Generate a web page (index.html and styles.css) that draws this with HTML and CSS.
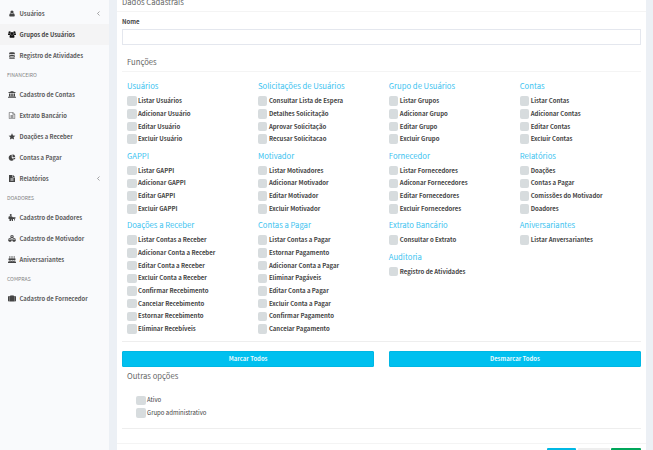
FILE: index.html
```html
<!DOCTYPE html>
<html lang="pt-BR">
<head>
  <meta charset="UTF-8">
  <title>Grupos de Usuários</title>
  <link rel="stylesheet" href="styles.css">
</head>
<body>
  <div class="wrapper">
    <!-- Sidebar menu -->
    <aside class="sidebar">
      <ul class="menu">
        <li class="item"><svg class="icon" viewBox="0 0 14 14"><circle cx="7" cy="4" r="3.2"/><path d="M4 6.5C2 7 1.5 9.500 1.500 11.500Q1.500 13 3 13H11Q12.500 13 12.500 11.500C12.500 9.500 12 7 10 6.500Q7 9 4 6.500Z"/></svg><span>Usuários</span><svg class="arrow" viewBox="0 0 6 10"><path d="M5 1L1 5L5 9"/></svg></li>
        <li class="item active"><svg class="icon" viewBox="0 0 16 14"><circle cx="3.200" cy="2.800" r="2.300"/><circle cx="12.800" cy="2.800" r="2.300"/><circle cx="8" cy="5" r="3.100"/><path d="M0 7Q0 4.500 1.500 4.500L5 5.500L5 8H1Q0 8 0 7ZM16 7Q16 4.500 14.500 4.500L11 5.500V8H15Q16 8 16 7ZM3 11.500Q3 7.500 5.500 7.500Q8 9.500 10.500 7.500Q13 7.500 13 11.500Q13 13.500 11.500 13.500H4.500Q3 13.500 3 11.500Z"/></svg><span>Grupos de Usuários</span></li>
        <li class="item"><svg class="icon" viewBox="0 0 14 14"><path d="M1 2.500C1 0 13 0 13 2.500V3C13 5 1 5 1 3ZM1 5C3 6.500 11 6.500 13 5V6.300C13 8.300 1 8.300 1 6.300ZM1 8.200C3 9.700 11 9.700 13 8.200V9.300C13 11.300 1 11.300 1 9.300ZM1 11.200C3 12.500 11 12.500 13 11.200V12C13 14.300 1 14.300 1 12Z"/></svg><span>Registro de Atividades</span></li>
        <li class="header">FINANCEIRO</li>
        <li class="item"><svg class="icon" viewBox="0 0 16 14"><path d="M8 0L15.500 3V4H.5V3ZM2 5H4.500V10.500H2ZM5.500 5H7.500V10.500H5.500ZM8.500 5H10.500V10.500H8.500ZM11.500 5H14V10.500H11.500ZM1 11H15V12H1ZM0 12.500H16V14H0Z"/></svg><span>Cadastro de Contas</span></li>
        <li class="item"><svg class="icon line" viewBox="0 0 14 14"><path d="M1.500 .7H8.500L12.500 4.500V13.300H1.500ZM8.500 .7V4.500H12.500M4 7H10M4 9H10M4 11H10"/></svg><span>Extrato Bancário</span></li>
        <li class="item"><svg class="icon" viewBox="0 0 14 14"><path d="M7 .5L9 4.800L13.700 5.400L10.300 8.600L11.200 13.200L7 11L2.800 13.200L3.700 8.600L.3 5.400L5 4.800Z"/></svg><span>Doações a Receber</span></li>
        <li class="item"><svg class="icon" viewBox="0 0 14 14"><path d="M6.500 1.500V7.500L10.700 11.700A6 6 0 1 1 6.500 1.500ZM8 .5A6 6 0 0 1 13.500 6H8ZM8 7.300H13.800A6 6 0 0 1 11.800 11.200Z"/></svg><span>Contas a Pagar</span></li>
        <li class="item"><svg class="icon" viewBox="0 0 14 14"><path fill-rule="evenodd" d="M1 0H8V5H13V14H1ZM9 0L13 4H9ZM4 6.500V7.500H10V6.500ZM4 8.700V9.700H10V8.700ZM4 11V12H10V11Z"/></svg><span>Relatórios</span><svg class="arrow" viewBox="0 0 6 10"><path d="M5 1L1 5L5 9"/></svg></li>
        <li class="header">DOADORES</li>
        <li class="item"><svg class="icon" viewBox="0 0 14 14"><circle cx="4.500" cy="2" r="2"/><path d="M0 6Q0 4.500 2 4.500H6.500L8.500 6.500H14V9H12.500V13H11V10H9V14H6.500V11H5V14H2V10H0Z"/></svg><span>Cadastro de Doadores</span></li>
        <li class="item"><svg class="icon" viewBox="0 0 16 14"><path d="M4 6L7.500 7.500V12L4 14L.5 12V7.500ZM12 6L15.500 7.500V12L12 14L8.500 12V7.500ZM8 0L11.500 1.500V5L8 6.500L4.500 5V1.500Z"/><path class="cut" d="M.5 7.800L4 9.300L7.500 7.800M8.500 7.800L12 9.300L15.500 7.800M4.500 1.800L8 3.300L11.500 1.800"/></svg><span>Cadastro de Motivador</span></li>
        <li class="item"><svg class="icon" viewBox="0 0 16 14"><path d="M3 0H4.500V5H3ZM7.200 0H8.800V5H7.200ZM11.500 0H13V5H11.500ZM1 5H15V8Q13 10 11 8Q9 10 7 8Q4 10 1 8ZM1 9.800Q4 11 7 9.800Q9 11 11 9.800Q13 11 15 9.800V12H16V14H0V12H1Z"/></svg><span>Aniversariantes</span></li>
        <li class="header">COMPRAS</li>
        <li class="item"><svg class="icon" viewBox="0 0 16 14"><path fill-rule="evenodd" d="M5 2V1Q5 0 6 0H10Q11 0 11 1V2H12V13H4V2ZM6.300 2H9.700V1.200H6.300ZM0 4Q0 2 2 2H3.500V13H2Q0 13 0 11ZM16 4Q16 2 14 2H12.500V13H14Q16 13 16 11Z"/></svg><span>Cadastro de Fornecedor</span></li>
      </ul>
    </aside>

    <!-- Form -->
    <main class="content">
      <form class="box">
        <div class="box-header">Dados Cadastrais</div>
        <div class="box-body">
          <label class="name-label">Nome</label>
          <input class="name-input" type="text">

          <h3 class="section-title">Funções</h3>
          <div class="functions">
            <div class="column">
              <h4>Usuários</h4>
              <label class="check"><i></i>Listar Usuários</label>
              <label class="check"><i></i>Adicionar Usuário</label>
              <label class="check"><i></i>Editar Usuário</label>
              <label class="check"><i></i>Excluir Usuário</label>
              <h4>GAPPI</h4>
              <label class="check"><i></i>Listar GAPPI</label>
              <label class="check"><i></i>Adicionar GAPPI</label>
              <label class="check"><i></i>Editar GAPPI</label>
              <label class="check"><i></i>Excluir GAPPI</label>
              <h4>Doações a Receber</h4>
              <label class="check"><i></i>Listar Contas a Receber</label>
              <label class="check"><i></i>Adicionar Conta a Receber</label>
              <label class="check"><i></i>Editar Conta a Receber</label>
              <label class="check"><i></i>Excluir Conta a Receber</label>
              <label class="check"><i></i>Confirmar Recebimento</label>
              <label class="check"><i></i>Cancelar Recebimento</label>
              <label class="check"><i></i>Estornar Recebimento</label>
              <label class="check"><i></i>Eliminar Recebíveis</label>
            </div>
            <div class="column">
              <h4>Solicitações de Usuários</h4>
              <label class="check"><i></i>Consultar Lista de Espera</label>
              <label class="check"><i></i>Detalhes Solicitação</label>
              <label class="check"><i></i>Aprovar Solicitação</label>
              <label class="check"><i></i>Recusar Solicitacao</label>
              <h4>Motivador</h4>
              <label class="check"><i></i>Listar Motivadores</label>
              <label class="check"><i></i>Adicionar Motivador</label>
              <label class="check"><i></i>Editar Motivador</label>
              <label class="check"><i></i>Excluir Motivador</label>
              <h4>Contas a Pagar</h4>
              <label class="check"><i></i>Listar Contas a Pagar</label>
              <label class="check"><i></i>Estornar Pagamento</label>
              <label class="check"><i></i>Adicionar Conta a Pagar</label>
              <label class="check"><i></i>Eliminar Pagáveis</label>
              <label class="check"><i></i>Editar Conta a Pagar</label>
              <label class="check"><i></i>Excluir Conta a Pagar</label>
              <label class="check"><i></i>Confirmar Pagamento</label>
              <label class="check"><i></i>Cancelar Pagamento</label>
            </div>
            <div class="column">
              <h4>Grupo de Usuários</h4>
              <label class="check"><i></i>Listar Grupos</label>
              <label class="check"><i></i>Adicionar Grupo</label>
              <label class="check"><i></i>Editar Grupo</label>
              <label class="check"><i></i>Excluir Grupo</label>
              <h4>Fornecedor</h4>
              <label class="check"><i></i>Listar Fornecedores</label>
              <label class="check"><i></i>Adiconar Fornecedores</label>
              <label class="check"><i></i>Editar Fornecedores</label>
              <label class="check"><i></i>Excluir Fornecedores</label>
              <h4>Extrato Bancário</h4>
              <label class="check"><i></i>Consultar o Extrato</label>
              <h4>Auditoria</h4>
              <label class="check"><i></i>Registro de Atividades</label>
            </div>
            <div class="column">
              <h4>Contas</h4>
              <label class="check"><i></i>Listar Contas</label>
              <label class="check"><i></i>Adicionar Contas</label>
              <label class="check"><i></i>Editar Contas</label>
              <label class="check"><i></i>Excluir Contas</label>
              <h4>Relatórios</h4>
              <label class="check"><i></i>Doações</label>
              <label class="check"><i></i>Contas a Pagar</label>
              <label class="check"><i></i>Comissões do Motivador</label>
              <label class="check"><i></i>Doadores</label>
              <h4>Aniversariantes</h4>
              <label class="check"><i></i>Listar Anversariantes</label>
            </div>
          </div>

          <div class="mark-buttons">
            <button type="button" class="btn-info">Marcar Todos</button>
            <button type="button" class="btn-info">Desmarcar Todos</button>
          </div>

          <h3 class="section-title other-title">Outras opções</h3>
          <div class="options">
            <label class="check"><i></i>Ativo</label>
            <label class="check"><i></i>Grupo administrativo</label>
          </div>
        </div>
        <div class="box-footer">
          <span class="action info"></span>
          <span class="action default"></span>
          <span class="action success"></span>
        </div>
      </form>
    </main>
  </div>
</body>
</html>
```
FILE: styles.css
```css
* {
  box-sizing: border-box;
}

body {
  margin: 0;
  overflow: hidden;
  background: #ecf0f5;
  font-family: "Noto Sans CJK SC", "Noto Sans", sans-serif;
  font-size: 6px;
  color: #444;
}

.wrapper {
  display: flex;
  height: 450px;
  overflow: hidden;
}

/* Sidebar */
.sidebar {
  width: 109px;
  flex: none;
  background: #f9fafc;
}

.menu {
  list-style: none;
  margin: 0;
  padding: 3px 0 0;
}

.item {
  display: flex;
  align-items: center;
  height: 21px;
  padding: 0 9px 0 8px;
  font-size: 5.820px;
  font-weight: bold;
  color: #5c5c5c;
  white-space: nowrap;
}

.item.active {
  background: #f4f4f5;
  color: #444;
}

.icon {
  width: 8px;
  height: 7px;
  margin-right: 3.500px;
  fill: #444;
}

.active .icon {
  fill: #111;
}

.icon.line {
  fill: none;
  stroke: #555;
  stroke-width: 1.2;
}

.cut {
  fill: none;
  stroke: #f9fafc;
  stroke-width: 1;
}

.arrow {
  width: 3px;
  height: 5px;
  margin-left: auto;
  fill: none;
  stroke: #777;
  stroke-width: 1.3;
}

.header {
  height: 18px;
  padding-left: 7px;
  line-height: 18px;
  font-size: 5.150px;
  color: #848484;
}

/* Main box */
.content {
  flex: 1;
  min-width: 0;
  padding: 0 7px 0 8px;
}

.box {
  height: 450px;
  background: #fff;
}

.box-header {
  height: 12px;
  padding-left: 5px;
  line-height: 3px;
  font-size: 7.700px;
  color: #666;
  border-bottom: 1px solid #f4f4f4;
}

.box-body {
  height: 431px;
  padding: 5px 5px 0;
}

.name-label {
  display: block;
  height: 11.500px;
  line-height: 10px;
  font-weight: bold;
}

.name-input {
  display: block;
  width: 100%;
  height: 16.500px;
  border: 1px solid #e4e7ee;
  outline: none;
}

.section-title {
  height: 27px;
  margin: 0;
  padding-left: 5px;
  line-height: 33px;
  font-size: 7.700px;
  font-weight: normal;
  color: #666;
  border-bottom: 1px solid #f4f4f4;
}

.functions {
  display: grid;
  grid-template-columns: repeat(3, 130.900px) 1fr;
  height: 269.500px;
  padding: 4px 0 0 5px;
  border-bottom: 1px solid #eee;
}

.column h4 {
  height: 18.800px;
  margin: 0;
  line-height: 19px;
  font-size: 7.700px;
  font-weight: normal;
  color: #3cc3f0;
  white-space: nowrap;
}

.check {
  display: flex;
  align-items: center;
  height: 12.700px;
  font-weight: bold;
  line-height: 12px;
  white-space: nowrap;
}

.check i {
  width: 9.500px;
  height: 9.500px;
  margin-right: 1.500px;
  background: #d7dcde;
  border-radius: 2px;
}

.mark-buttons {
  display: grid;
  grid-template-columns: 1fr 1fr;
  gap: 14.500px;
  padding-top: 9px;
}

.btn-info {
  height: 16.500px;
  padding: 0;
  border: 1px solid #00b7e4;
  border-radius: 1px;
  background: #00c0ef;
  color: #e6f9fe;
  font-family: inherit;
  font-size: 5.900px;
  font-weight: bold;
  line-height: 14px;
}

.other-title {
  border: 0;
  line-height: 18px;
}

.options {
  height: 35px;
  padding-left: 14px;
  border-bottom: 1px solid #eee;
}

.options .check {
  font-weight: normal;
}

/* Footer actions, cut by the bottom of the window */
.box-footer {
  display: flex;
  justify-content: flex-end;
  gap: 1.500px;
  padding: 4px 5px 0;
  border-top: 1px solid #f4f4f4;
}

.action {
  height: 16px;
  border-radius: 1px;
}

.info {
  width: 29px;
  background: #00b8e4;
}

.default {
  width: 32px;
  background: #eee;
}

.success {
  width: 30px;
  background: #00a65a;
}
```
